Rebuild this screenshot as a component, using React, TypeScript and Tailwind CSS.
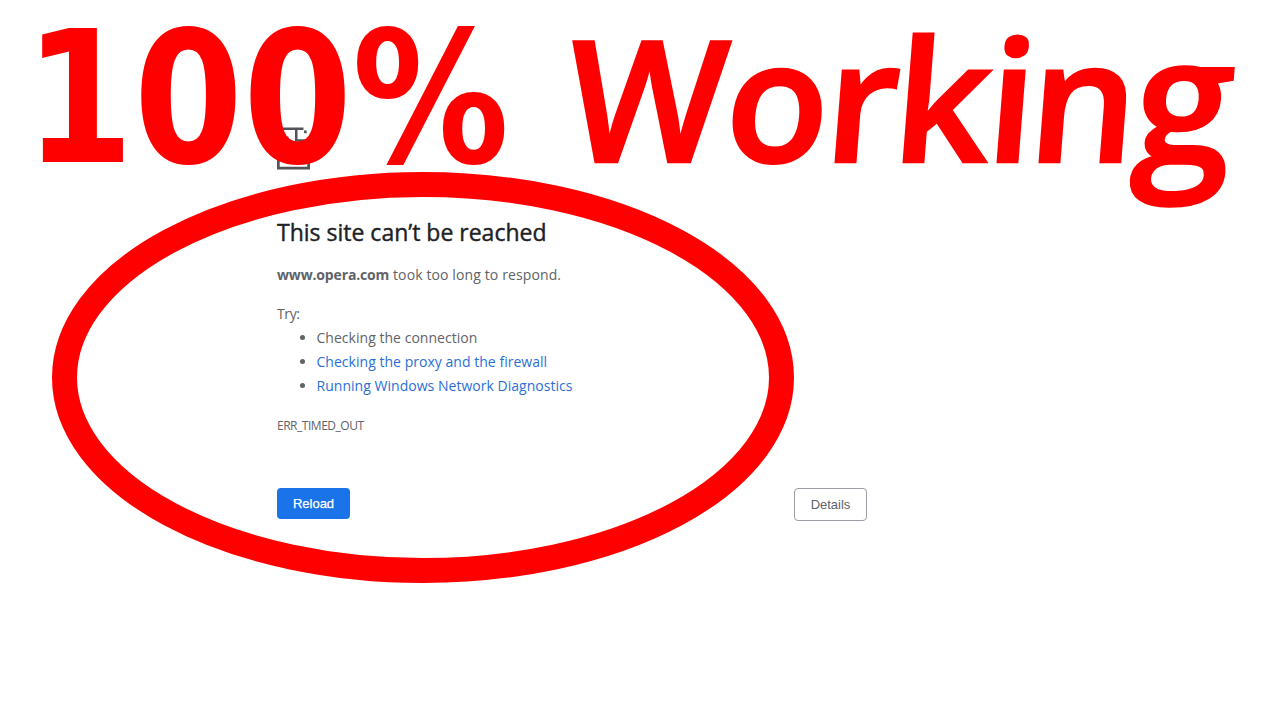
type Suggestion = {
  label: string
  link: boolean
}

const suggestions: Suggestion[] = [
  { label: 'Checking the connection', link: false },
  { label: 'Checking the proxy and the firewall', link: true },
  { label: 'Running Windows Network Diagnostics', link: true },
]

function PageIcon() {
  return (
    <svg width="33" height="43" viewBox="0 0 33 43" fill="#535457">
      {/* Page outline with the folded corner */}
      <path d="M0 0.5H26.5V3H20.5V12.3H33V42.5H0ZM2.7 3V39.8H30.3V14.8H18V3Z" fillRule="evenodd" />
      <rect x="27" y="3.5" width="2.7" height="2.7" />
      {/* Face */}
      <rect x="6" y="12" width="2.7" height="2.7" />
      <rect x="8.7" y="9.5" width="2.7" height="2.7" />
    </svg>
  )
}

function Overlay() {
  return (
    <svg className="absolute inset-0 pointer-events-none" width="1280" height="720" viewBox="0 0 1280 720">
      <ellipse cx="423" cy="377.5" rx="358.5" ry="193" fill="none" stroke="#ff0000" strokeWidth="25" />
      <g fill="#ff0000">
        <text
          transform="translate(24.5 162) scale(0.853 1)"
          className="font-['DejaVu_Sans',sans-serif] font-bold text-[184px]"
        >
          100%
        </text>
        <text
          transform="translate(0 161.5) skewX(-4.5)"
          x="563 722 822 890 984 1026 1131"
          stroke="#ff0000"
          strokeWidth="2.5"
          className="font-['Open_Sans',sans-serif] font-semibold text-[169px]"
        >
          Workin<tspan dy="2" className="text-[177px]">g</tspan>
        </text>
      </g>
    </svg>
  )
}

export default function App() {
  return (
    <div className="relative w-[1280px] h-[720px] overflow-hidden bg-white font-['Open_Sans',sans-serif] text-[#5f6368]">
      <main className="ml-[277px] w-[590px] pt-[127px]">
        <PageIcon />

        {/* Error message */}
        <h1 className="mt-[47px] h-[30px] text-[23px] leading-[30px] font-medium text-[#202124] whitespace-nowrap [-webkit-text-stroke:0.4px_#202124]">
          This site can’t be reached
        </h1>
        <p className="mt-4 text-[14px] leading-6 whitespace-nowrap">
          <strong className="font-bold tracking-[-0.15px]">www.opera.com</strong>
          <span className="tracking-[0.12px]"> took too long to respond.</span>
        </p>

        <div className="mt-[15px] text-[14px] leading-6 whitespace-nowrap">
          <p className="tracking-[-0.4px]">Try:</p>
          <ul className="list-disc pl-[39.5px] tracking-[0.03px]">
            {suggestions.map(item => (
              <li key={item.label}>
                <span className={item.link ? 'text-[#2b6fd6]' : ''}>{item.label}</span>
              </li>
            ))}
          </ul>
        </div>

        <div className="mt-[17px] text-[12px] leading-[22px] tracking-[-0.48px]">ERR_TIMED_OUT</div>

        {/* Buttons */}
        <div className="mt-[51px] flex items-start justify-between font-['Liberation_Sans',Arial,sans-serif] text-[13px]">
          <button className="h-[31px] w-[73px] rounded-[4px] bg-[#1a73e8] text-white [-webkit-text-stroke:0.25px_white]">Reload</button>
          <button className="h-[33px] w-[73px] rounded-[4px] border border-[#9aa0a6] bg-white">Details</button>
        </div>
      </main>

      <Overlay />
    </div>
  )
}
